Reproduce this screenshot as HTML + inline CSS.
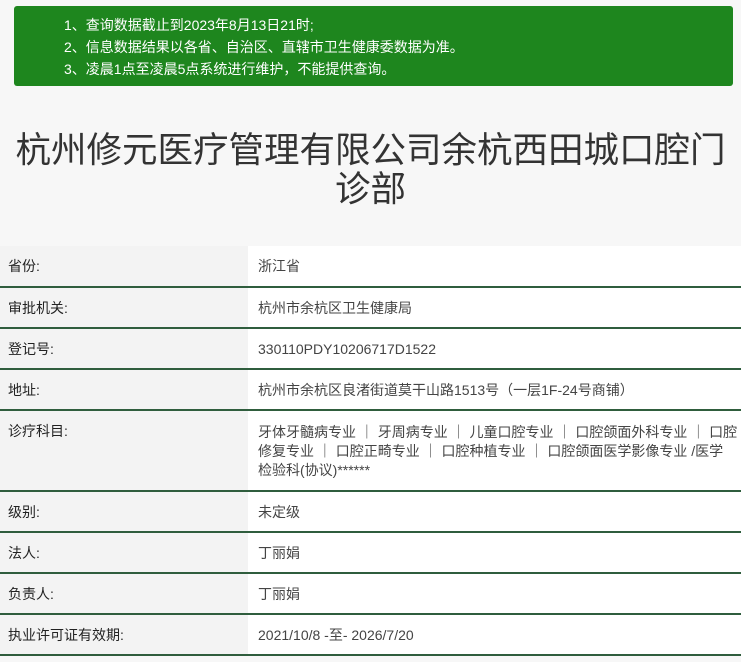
<!DOCTYPE html>
<html><head><meta charset="utf-8"><style>
body{margin:0;width:741px;height:662px;overflow:hidden;background:#f7f7f7;font-family:"Liberation Sans","Noto Sans CJK SC",sans-serif;}
.notice{position:absolute;left:14px;top:6px;width:719px;height:80px;background:#1e861e;border-radius:3px;color:#fff;font-size:14px;}
.notice div{position:absolute;left:50px;}
h1{position:absolute;left:0;top:131px;width:741px;margin:0;text-align:center;font-weight:normal;font-size:35.5px;line-height:39px;color:#333;}
table{position:absolute;left:0;top:246px;width:741px;border-collapse:collapse;font-size:14px;}
td{border-bottom:2px solid #2f5d3d;vertical-align:top;padding:0;}
td.l{width:248px;background:#f3f3f3;color:#222;padding-left:8px;box-sizing:border-box;}
td.v{background:#fff;color:#444;padding-left:10px;padding-right:2px;}
td div{padding-top:11px;line-height:19px;}
tr{height:41px;}
</style></head><body>
<div class="notice">
<div style="top:9px">1、查询数据截止到2023年8月13日21时;</div>
<div style="top:31px">2、信息数据结果以各省、自治区、直辖市卫生健康委数据为准。</div>
<div style="top:53px">3、凌晨1点至凌晨5点系统进行维护，不能提供查询。</div>
</div>
<h1>杭州修元医疗管理有限公司余杭西田城口腔门<br>诊部</h1>
<table>
<tr><td class="l"><div>省份:</div></td><td class="v"><div>浙江省</div></td></tr>
<tr><td class="l"><div>审批机关:</div></td><td class="v"><div>杭州市余杭区卫生健康局</div></td></tr>
<tr><td class="l"><div>登记号:</div></td><td class="v"><div>330110PDY10206717D1522</div></td></tr>
<tr><td class="l"><div>地址:</div></td><td class="v"><div>杭州市余杭区良渚街道莫干山路1513号（一层1F-24号商铺）</div></td></tr>
<tr style="height:81px"><td class="l"><div>诊疗科目:</div></td><td class="v"><div style="padding-top:12px">牙体牙髓病专业 ｜ 牙周病专业 ｜ 儿童口腔专业 ｜ 口腔颌面外科专业 ｜ 口腔<br>修复专业 ｜ 口腔正畸专业 ｜ 口腔种植专业 ｜ 口腔颌面医学影像专业 /医学<br>检验科(协议)******</div></td></tr>
<tr><td class="l"><div>级别:</div></td><td class="v"><div>未定级</div></td></tr>
<tr><td class="l"><div>法人:</div></td><td class="v"><div>丁丽娟</div></td></tr>
<tr><td class="l"><div>负责人:</div></td><td class="v"><div>丁丽娟</div></td></tr>
<tr><td class="l"><div>执业许可证有效期:</div></td><td class="v"><div>2021/10/8 -至- 2026/7/20</div></td></tr>
</table>
</body></html>
